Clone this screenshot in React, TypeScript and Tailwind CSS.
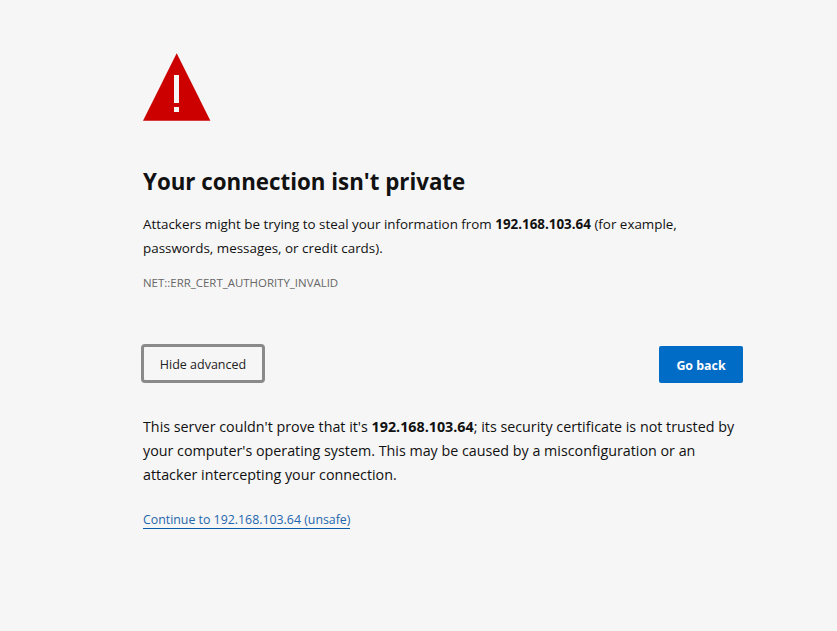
export default function App() {
  return (
    <div className="min-h-[631px] bg-[#f6f6f6] font-['Open_Sans','Noto_Sans',sans-serif] text-[#111]">
      <div className="ml-[143px] w-[600px] pt-[53px]">
        <svg width="68" height="68" viewBox="0 0 68 68" className="block">
          <polygon points="33.7,0.3 67.4,67.7 0,67.7" fill="#cd0000" />
          <rect x="31" y="22" width="5" height="28" fill="#f6f6f6" />
          <rect x="31" y="54" width="5" height="5" fill="#f6f6f6" />
        </svg>
        <h1 className="mt-[43px] text-[22.3px] leading-[36px] font-bold">Your connection isn't private</h1>
        <p className="mt-[12px] text-[13.4px] leading-[24px]">
          Attackers might be trying to steal your information from <strong className="font-bold">192.168.103.64</strong> (for example,
          <br />
          passwords, messages, or credit cards).
        </p>
        <p className="mt-[15px] text-[11.45px] leading-[16px] text-[#666]">NET::ERR_CERT_AUTHORITY_INVALID</p>
        <div className="mt-[53px] flex items-end justify-between">
          <button className="-ml-[2px] h-[39px] w-[124px] rounded-[4px] border-[3px] border-[#8a8a8a] pt-[3px] text-[12.5px] text-[#222]">Hide advanced</button>
          <button className="h-[37px] w-[84px] rounded-[2px] bg-[#006cc6] pt-[3px] text-[12.4px] font-bold text-white">Go back</button>
        </div>
        <p className="mt-[32px] text-[14.3px] leading-[24px]">
          This server couldn't prove that it's <strong className="font-bold">192.168.103.64</strong>; its security certificate is not trusted by
          <br />
          your computer's operating system. This may be caused by a misconfiguration or an
          <br />
          attacker intercepting your connection.
        </p>
        <a href="#" className="mt-[25px] inline-block border-b border-[#0a5aa8] text-[12.35px] leading-[16px] text-[#1f66ad]">Continue to 192.168.103.64 (unsafe)</a>
      </div>
    </div>
  )
}
